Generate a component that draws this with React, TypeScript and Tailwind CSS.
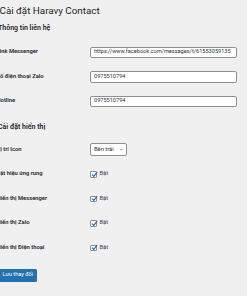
import React from "react";

const font = { fontFamily: 'Roboto, "Noto Sans", sans-serif' };

function Row({ label, children }: { label: string; children: React.ReactNode }) {
  return (
    <div className="flex h-[24.5px] items-center">
      <div className="ml-[-3.5px] w-[93.5px] shrink-0 whitespace-nowrap text-[5.8px] font-semibold leading-none text-[#1d2327]">{label}</div>
      <div className="flex items-center">{children}</div>
    </div>
  );
}

function TextInput({ value }: { value: string }) {
  return (
    <div className="flex h-[11.5px] w-[147px] items-center overflow-hidden whitespace-nowrap rounded-[2px] border border-[#8c8f94] bg-white pl-[3px] text-[5.6px] leading-none text-[#2c3338]">
      {value}
    </div>
  );
}

function Check() {
  return (
    <div className="flex items-center gap-[3px]">
      <div className="relative h-[6.5px] w-[6.5px] rounded-[1px] border border-[#8c8f94] bg-white">
        <svg viewBox="0 0 10 10" className="absolute left-[-0.5px] top-[-1.5px] h-[7px] w-[7px]">
          <path d="M1.5 5.2 L4 7.6 L8.8 1.6" fill="none" stroke="#2271b1" strokeWidth="1.8" />
        </svg>
      </div>
      <span className="text-[5.8px] leading-none text-[#3c434a]">Bật</span>
    </div>
  );
}

export default function App() {
  return (
    <div className="h-[296px] w-[247px] overflow-hidden bg-[#f0f0f1]" style={font}>
      <div>
        <div className="ml-[-0.5px] flex h-[22px] items-center text-[9.8px] leading-none text-[#1d2327]">Cài đặt Haravy Contact</div>
        <div className="h-[18px]">
          <div className="ml-[-2px] flex h-[12px] items-center text-[7px] font-semibold leading-none text-[#1d2327]">Thông tin liên hệ</div>
        </div>
        <Row label="Link Messenger">
          <TextInput value="https://www.facebook.com/messages/t/61553059135" />
        </Row>
        <Row label="Số điện thoại Zalo">
          <TextInput value="0975510794" />
        </Row>
        <Row label="Hotline">
          <TextInput value="0975510794" />
        </Row>
        <div className="h-[24px] pt-[7.5px]">
          <div className="ml-[-2px] flex h-[12px] items-center text-[7px] font-semibold leading-none text-[#1d2327]">Cài đặt hiển thị</div>
        </div>
        <Row label="Vị trí Icon">
          <div className="flex h-[13px] w-[37px] items-center justify-between rounded-[2px] border border-[#8c8f94] bg-white pl-[3px] pr-[2px] text-[5.8px] leading-none text-[#2c3338]">
            <span>Bên trái</span>
            <svg viewBox="0 0 10 10" className="h-[5px] w-[5px]">
              <path d="M2 3.5 L5 6.5 L8 3.5" fill="none" stroke="#50575e" strokeWidth="1.3" />
            </svg>
          </div>
        </Row>
        <Row label="Bật hiệu ứng rung">
          <Check />
        </Row>
        <Row label="Hiển thị Messenger">
          <Check />
        </Row>
        <Row label="Hiển thị Zalo">
          <Check />
        </Row>
        <Row label="Hiển thị Điện thoại">
          <Check />
        </Row>
        <div className="mt-[8.5px] flex">
          <div className="ml-[-1.5px] flex h-[13px] items-center rounded-[1.5px] bg-[#2271b1] px-[4px] text-[5.6px] leading-none text-white">Lưu thay đổi</div>
        </div>
      </div>
    </div>
  );
}
